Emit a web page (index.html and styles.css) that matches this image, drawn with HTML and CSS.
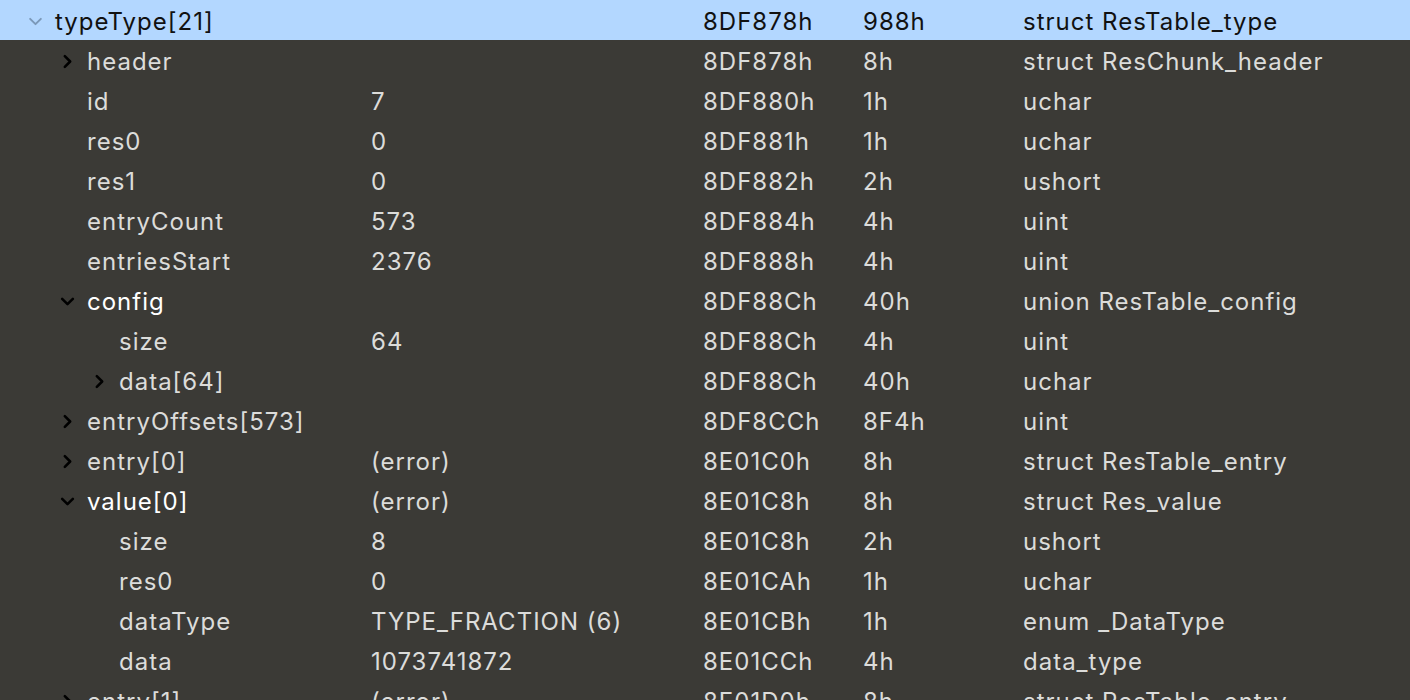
FILE: index.html
```html
<!DOCTYPE html>
<html>
<head>
<meta charset="utf-8">
<link rel="stylesheet" href="styles.css">
</head>
<body>
<div class="tree">
  <div class="row selected lv0"><div class="name"><span class="chev"><svg viewBox="0 0 14 14"><path d="M2 4.5 L7 9.5 L12 4.5"/></svg></span><span class="label">typeType[21]</span></div><div class="val"></div><div class="start">8DF878h</div><div class="size">988h</div><div class="type">struct ResTable_type</div></div>
  <div class="row lv1"><div class="name"><span class="chev"><svg viewBox="0 0 14 14"><path d="M4.5 2 L9.5 7 L4.5 12"/></svg></span><span class="label">header</span></div><div class="val"></div><div class="start">8DF878h</div><div class="size">8h</div><div class="type">struct ResChunk_header</div></div>
  <div class="row lv1"><div class="name"><span class="chev"></span><span class="label">id</span></div><div class="val">7</div><div class="start">8DF880h</div><div class="size">1h</div><div class="type">uchar</div></div>
  <div class="row lv1"><div class="name"><span class="chev"></span><span class="label">res0</span></div><div class="val">0</div><div class="start">8DF881h</div><div class="size">1h</div><div class="type">uchar</div></div>
  <div class="row lv1"><div class="name"><span class="chev"></span><span class="label">res1</span></div><div class="val">0</div><div class="start">8DF882h</div><div class="size">2h</div><div class="type">ushort</div></div>
  <div class="row lv1"><div class="name"><span class="chev"></span><span class="label">entryCount</span></div><div class="val">573</div><div class="start">8DF884h</div><div class="size">4h</div><div class="type">uint</div></div>
  <div class="row lv1"><div class="name"><span class="chev"></span><span class="label">entriesStart</span></div><div class="val">2376</div><div class="start">8DF888h</div><div class="size">4h</div><div class="type">uint</div></div>
  <div class="row lv1 open"><div class="name"><span class="chev"><svg viewBox="0 0 14 14"><path d="M2 4.5 L7 9.5 L12 4.5"/></svg></span><span class="label">config</span></div><div class="val"></div><div class="start">8DF88Ch</div><div class="size">40h</div><div class="type">union ResTable_config</div></div>
  <div class="row lv2"><div class="name"><span class="chev"></span><span class="label">size</span></div><div class="val">64</div><div class="start">8DF88Ch</div><div class="size">4h</div><div class="type">uint</div></div>
  <div class="row lv2"><div class="name"><span class="chev"><svg viewBox="0 0 14 14"><path d="M4.5 2 L9.5 7 L4.5 12"/></svg></span><span class="label">data[64]</span></div><div class="val"></div><div class="start">8DF88Ch</div><div class="size">40h</div><div class="type">uchar</div></div>
  <div class="row lv1"><div class="name"><span class="chev"><svg viewBox="0 0 14 14"><path d="M4.5 2 L9.5 7 L4.5 12"/></svg></span><span class="label">entryOffsets[573]</span></div><div class="val"></div><div class="start">8DF8CCh</div><div class="size">8F4h</div><div class="type">uint</div></div>
  <div class="row lv1"><div class="name"><span class="chev"><svg viewBox="0 0 14 14"><path d="M4.5 2 L9.5 7 L4.5 12"/></svg></span><span class="label">entry[0]</span></div><div class="val">(error)</div><div class="start">8E01C0h</div><div class="size">8h</div><div class="type">struct ResTable_entry</div></div>
  <div class="row lv1 open"><div class="name"><span class="chev"><svg viewBox="0 0 14 14"><path d="M2 4.5 L7 9.5 L12 4.5"/></svg></span><span class="label">value[0]</span></div><div class="val">(error)</div><div class="start">8E01C8h</div><div class="size">8h</div><div class="type">struct Res_value</div></div>
  <div class="row lv2"><div class="name"><span class="chev"></span><span class="label">size</span></div><div class="val">8</div><div class="start">8E01C8h</div><div class="size">2h</div><div class="type">ushort</div></div>
  <div class="row lv2"><div class="name"><span class="chev"></span><span class="label">res0</span></div><div class="val">0</div><div class="start">8E01CAh</div><div class="size">1h</div><div class="type">uchar</div></div>
  <div class="row lv2"><div class="name"><span class="chev"></span><span class="label">dataType</span></div><div class="val">TYPE_FRACTION (6)</div><div class="start">8E01CBh</div><div class="size">1h</div><div class="type">enum _DataType</div></div>
  <div class="row lv2"><div class="name"><span class="chev"></span><span class="label">data</span></div><div class="val">1073741872</div><div class="start">8E01CCh</div><div class="size">4h</div><div class="type">data_type</div></div>
  <div class="row lv1"><div class="name"><span class="chev"><svg viewBox="0 0 14 14"><path d="M4.5 2 L9.5 7 L4.5 12"/></svg></span><span class="label">entry[1]</span></div><div class="val">(error)</div><div class="start">8E01D0h</div><div class="size">8h</div><div class="type">struct ResTable_entry</div></div>
</div>
</body>
</html>
```

FILE: styles.css
```css
html, body {
  margin: 0;
  padding: 0;
  background: #3b3a36;
  overflow: hidden;
}
.tree {
  font-family: Inter, "Noto Sans", sans-serif;
  font-size: 24px;
  letter-spacing: 1px;
  color: #dcdcda;
  width: 1410px;
}
.row {
  display: grid;
  grid-template-columns: 371px 332px 160px 160px 1fr;
  height: 37px;
  padding-top: 3px;
  line-height: 37px;
  white-space: nowrap;
}
.row.selected {
  background: #b3d7ff;
  color: #111;
}
.row.open .label {
  color: #ffffff;
}
.name {
  display: flex;
  align-items: center;
}
.lv0 .name { padding-left: 22px; }
.lv1 .name { padding-left: 54px; }
.lv2 .name { padding-left: 86px; }
.chev {
  width: 33px;
  height: 37px;
  flex: none;
  display: flex;
  align-items: center;
}
.chev svg {
  width: 15px;
  height: 15px;
  margin-left: 6px;
  fill: none;
  stroke: #000;
  stroke-width: 2.4;
  stroke-linecap: round;
  stroke-linejoin: round;
}
.selected .chev svg {
  stroke: #7b98b8;
  stroke-width: 1.8;
}
```
